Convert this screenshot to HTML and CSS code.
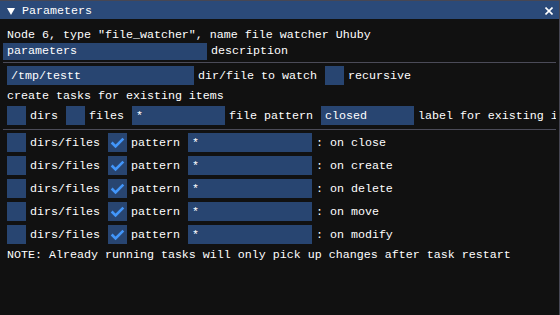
FILE: index.html
```html
<!DOCTYPE html>
<html>
<head>
<meta charset="utf-8">
<link rel="stylesheet" href="styles.css">
</head>
<body>
<div class="window">
  <div class="titlebar">
    <svg class="arrow" width="8" height="7" viewBox="0 0 8 7"><polygon points="0,0 8,0 4,7" fill="#fff"/></svg>
    <span class="title">Parameters</span>
    <svg class="close" width="8" height="8" viewBox="0 0 8 8"><path d="M0.5 0.5L7.5 7.5M7.5 0.5L0.5 7.5" stroke="#fff" stroke-width="1.6" fill="none"/></svg>
  </div>
  <div class="content">
    <div class="line l-node">Node 6, type "file_watcher", name file watcher Uhuby</div>
    <div class="row row-params">
      <div class="field"><div class="frame frame-short w204">parameters</div><span class="label label-short">description</span></div>
    </div>
    <div class="sep sep-1"></div>
    <div class="row row-path">
      <div class="field"><div class="frame w187">/tmp/testt</div><span class="label">dir/file to watch</span></div>
      <div class="field"><div class="check"></div><span class="label">recursive</span></div>
    </div>
    <div class="line l-create">create tasks for existing items</div>
    <div class="row row-existing">
      <div class="field"><div class="check"></div><span class="label">dirs</span></div>
      <div class="field"><div class="check"></div><span class="label">files</span></div>
      <div class="field"><div class="frame w93">*</div><span class="label">file pattern</span></div>
      <div class="field"><div class="frame w93">closed</div><span class="label nowrap">label for existing items</span></div>
    </div>
    <div class="sep sep-2"></div>
    <div class="events">
      <div class="row">
        <div class="field"><div class="check"></div><span class="label">dirs/files</span></div>
        <div class="field"><div class="check"><svg width="19" height="19"><polyline points="3.65,9.5 7.55,13.4 15.35,5.6" fill="none" stroke="#4296fa" stroke-width="2.6"/></svg></div><span class="label">pattern</span></div>
        <div class="field"><div class="frame w124">*</div><span class="label">: on close</span></div>
      </div>
      <div class="row">
        <div class="field"><div class="check"></div><span class="label">dirs/files</span></div>
        <div class="field"><div class="check"><svg width="19" height="19"><polyline points="3.65,9.5 7.55,13.4 15.35,5.6" fill="none" stroke="#4296fa" stroke-width="2.6"/></svg></div><span class="label">pattern</span></div>
        <div class="field"><div class="frame w124">*</div><span class="label">: on create</span></div>
      </div>
      <div class="row">
        <div class="field"><div class="check"></div><span class="label">dirs/files</span></div>
        <div class="field"><div class="check"><svg width="19" height="19"><polyline points="3.65,9.5 7.55,13.4 15.35,5.6" fill="none" stroke="#4296fa" stroke-width="2.6"/></svg></div><span class="label">pattern</span></div>
        <div class="field"><div class="frame w124">*</div><span class="label">: on delete</span></div>
      </div>
      <div class="row">
        <div class="field"><div class="check"></div><span class="label">dirs/files</span></div>
        <div class="field"><div class="check"><svg width="19" height="19"><polyline points="3.65,9.5 7.55,13.4 15.35,5.6" fill="none" stroke="#4296fa" stroke-width="2.6"/></svg></div><span class="label">pattern</span></div>
        <div class="field"><div class="frame w124">*</div><span class="label">: on move</span></div>
      </div>
      <div class="row">
        <div class="field"><div class="check"></div><span class="label">dirs/files</span></div>
        <div class="field"><div class="check"><svg width="19" height="19"><polyline points="3.65,9.5 7.55,13.4 15.35,5.6" fill="none" stroke="#4296fa" stroke-width="2.6"/></svg></div><span class="label">pattern</span></div>
        <div class="field"><div class="frame w124">*</div><span class="label">: on modify</span></div>
      </div>
    </div>
    <div class="line l-note">NOTE: Already running tasks will only pick up changes after task restart</div>
  </div>
</div>
</body>
</html>
```
FILE: styles.css
```css
html, body {
  margin: 0;
  padding: 0;
  background: #111111;
}
body {
  font-family: "Liberation Mono", "DejaVu Sans Mono", monospace;
  font-size: 11.665px;
  line-height: 13px;
  color: #ffffff;
}
.window {
  width: 559px;
  height: 314px;
  border-top: 1px solid #474754;
  border-right: 1px solid #474754;
  background: #111111;
  overflow: hidden;
}
.titlebar {
  height: 18px;
  background: #2b4a79;
  display: flex;
  align-items: flex-start;
}
.arrow {
  margin-left: 7px;
  margin-top: 7px;
  flex: none;
}
.title {
  margin-left: 7px;
  padding-top: 4px;
  white-space: pre;
}
.close {
  margin-left: auto;
  margin-right: 6px;
  margin-top: 6px;
  flex: none;
}
.content {
  width: 556px;
  box-sizing: border-box;
  padding-left: 7px;
  overflow: hidden;
}
.line {
  white-space: pre;
  height: 13px;
}
.l-node { margin-top: 10px; }
.l-create { margin-top: 5px; }
.l-note { margin-top: 5px; }
.row {
  display: flex;
  gap: 8px;
  align-items: flex-start;
  height: 19px;
  white-space: pre;
}
.row-params {
  margin-top: 1px;
  margin-left: -4px;
  height: 17px;
}
.row-path { margin-top: 3px; }
.row-existing { margin-top: 3px; }
.events {
  margin-top: 3px;
  display: flex;
  flex-direction: column;
  gap: 4px;
}
.sep {
  height: 1px;
  margin-left: -4px;
  background: #4b4b58;
}
.sep-1 { margin-top: 2px; }
.sep-2 { margin-top: 4px; }
.field {
  display: flex;
  gap: 4px;
  align-items: flex-start;
  flex: none;
}
.frame {
  height: 19px;
  box-sizing: border-box;
  padding: 4px 0 0 4px;
  background: #284571;
  overflow: hidden;
  flex: none;
}
.frame-short {
  height: 17px;
  padding-top: 2px;
}
.label {
  padding-top: 4px;
  white-space: pre;
}
.label-short { padding-top: 2px; }
.check {
  width: 19px;
  height: 19px;
  background: #284571;
  flex: none;
}
.check svg { display: block; }
.w204 { width: 204px; }
.w187 { width: 187px; }
.w124 { width: 124px; }
.w93 { width: 93px; }
```
